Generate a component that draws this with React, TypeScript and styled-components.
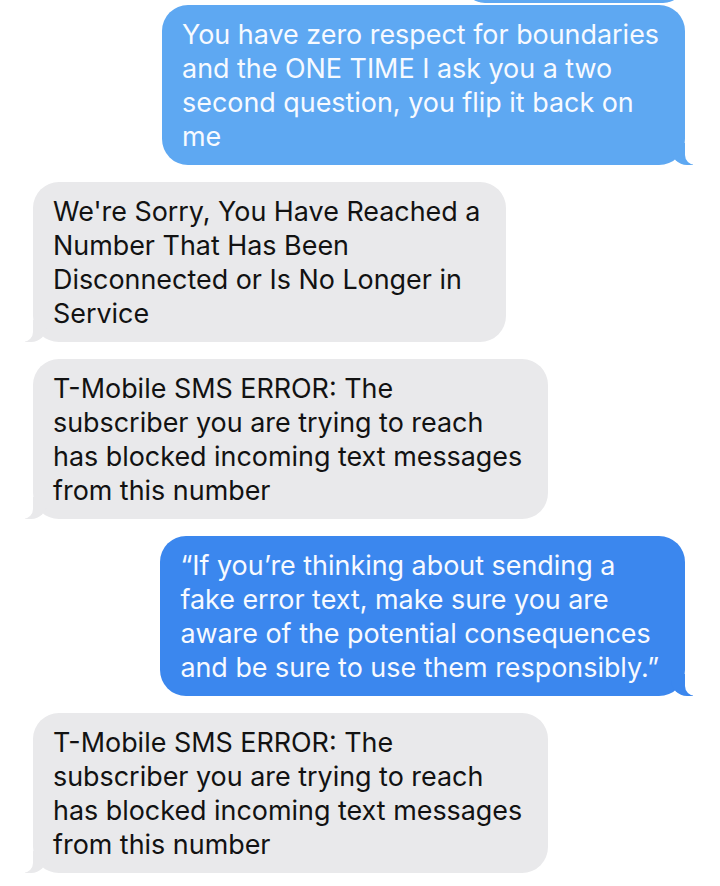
import React from "react";
import styled, {createGlobalStyle} from "styled-components";

const GlobalStyle = createGlobalStyle`
    html, body {
        margin: 0;
        padding: 0;
        background: #ffffff;
    }
    body {
        font-family: Inter, "Liberation Sans", Arial, sans-serif;
    }
`;

const colors = {
    lightBlue: "#5ea8f2",
    blue: "#3b87ee",
    gray: "#e9e9eb",
    page: "#ffffff"
};

const Thread = styled.div`
    width: 720px;
    height: 886px;
    box-sizing: border-box;
    padding: 0 35px 0 33px;
    display: flex;
    flex-direction: column;
    overflow: hidden;
    background: ${colors.page};
`;

// bottom edge of the previous message, scrolled almost out of view
const PrevEdge = styled.div`
    align-self: flex-end;
    width: 222px;
    height: 40px;
    margin-top: -37px;
    background: ${colors.lightBlue};
    border-radius: 0 0 22px 22px;
`;

type Side = "me" | "them";

const Bubble = styled.div<{ $side: Side; $bg: string; $gap: number }>`
    position: relative;
    align-self: ${p => p.$side === "me" ? "flex-end" : "flex-start"};
    margin-top: ${p => p.$gap}px;
    padding: 12px 26px 12px 20px;
    border-radius: 26px;
    background: ${p => p.$bg};
    color: ${p => p.$side === "me" ? "#f7faff" : "#121212"};
    font-size: 26.9px;
    line-height: 34px;
    white-space: nowrap;

    &::before {
        content: "";
        position: absolute;
        bottom: 0;
        ${p => p.$side === "me" ? "right: -8px;" : "left: -8px;"}
        width: 22px;
        height: 22px;
        background: ${p => p.$bg};
        ${p => p.$side === "me"
            ? "border-bottom-left-radius: 16px;"
            : "border-bottom-right-radius: 16px;"}
    }

    &::after {
        content: "";
        position: absolute;
        bottom: 0;
        ${p => p.$side === "me" ? "right: -10px;" : "left: -10px;"}
        width: 10px;
        height: 22px;
        background: ${colors.page};
        ${p => p.$side === "me"
            ? "border-bottom-left-radius: 11px;"
            : "border-bottom-right-radius: 11px;"}
    }
`;

const messages: { side: Side; bg: string; gap: number; lines: string[] }[] = [
    {
        side: "me", bg: colors.lightBlue, gap: 2,
        lines: [
            "You have zero respect for boundaries",
            "and the ONE TIME I ask you a two",
            "second question, you flip it back on",
            "me"
        ]
    },
    {
        side: "them", bg: colors.gray, gap: 17,
        lines: [
            "We're Sorry, You Have Reached a",
            "Number That Has Been",
            "Disconnected or Is No Longer in",
            "Service"
        ]
    },
    {
        side: "them", bg: colors.gray, gap: 17,
        lines: [
            "T-Mobile SMS ERROR: The",
            "subscriber you are trying to reach",
            "has blocked incoming text messages",
            "from this number"
        ]
    },
    {
        side: "me", bg: colors.blue, gap: 17,
        lines: [
            "\u201CIf you\u2019re thinking about sending a",
            "fake error text, make sure you are",
            "aware of the potential consequences",
            "and be sure to use them responsibly.\u201D"
        ]
    },
    {
        side: "them", bg: colors.gray, gap: 17,
        lines: [
            "T-Mobile SMS ERROR: The",
            "subscriber you are trying to reach",
            "has blocked incoming text messages",
            "from this number"
        ]
    }
];

export default function App() {
    return (
        <>
            <GlobalStyle/>
            <Thread>
                <PrevEdge/>
                {messages.map((m, i) =>
                    <Bubble key={i} $side={m.side} $bg={m.bg} $gap={m.gap}>
                        {m.lines.map((line, j) =>
                            <React.Fragment key={j}>
                                {line}
                                {j < m.lines.length - 1 && <br/>}
                            </React.Fragment>
                        )}
                    </Bubble>
                )}
            </Thread>
        </>
    );
}
